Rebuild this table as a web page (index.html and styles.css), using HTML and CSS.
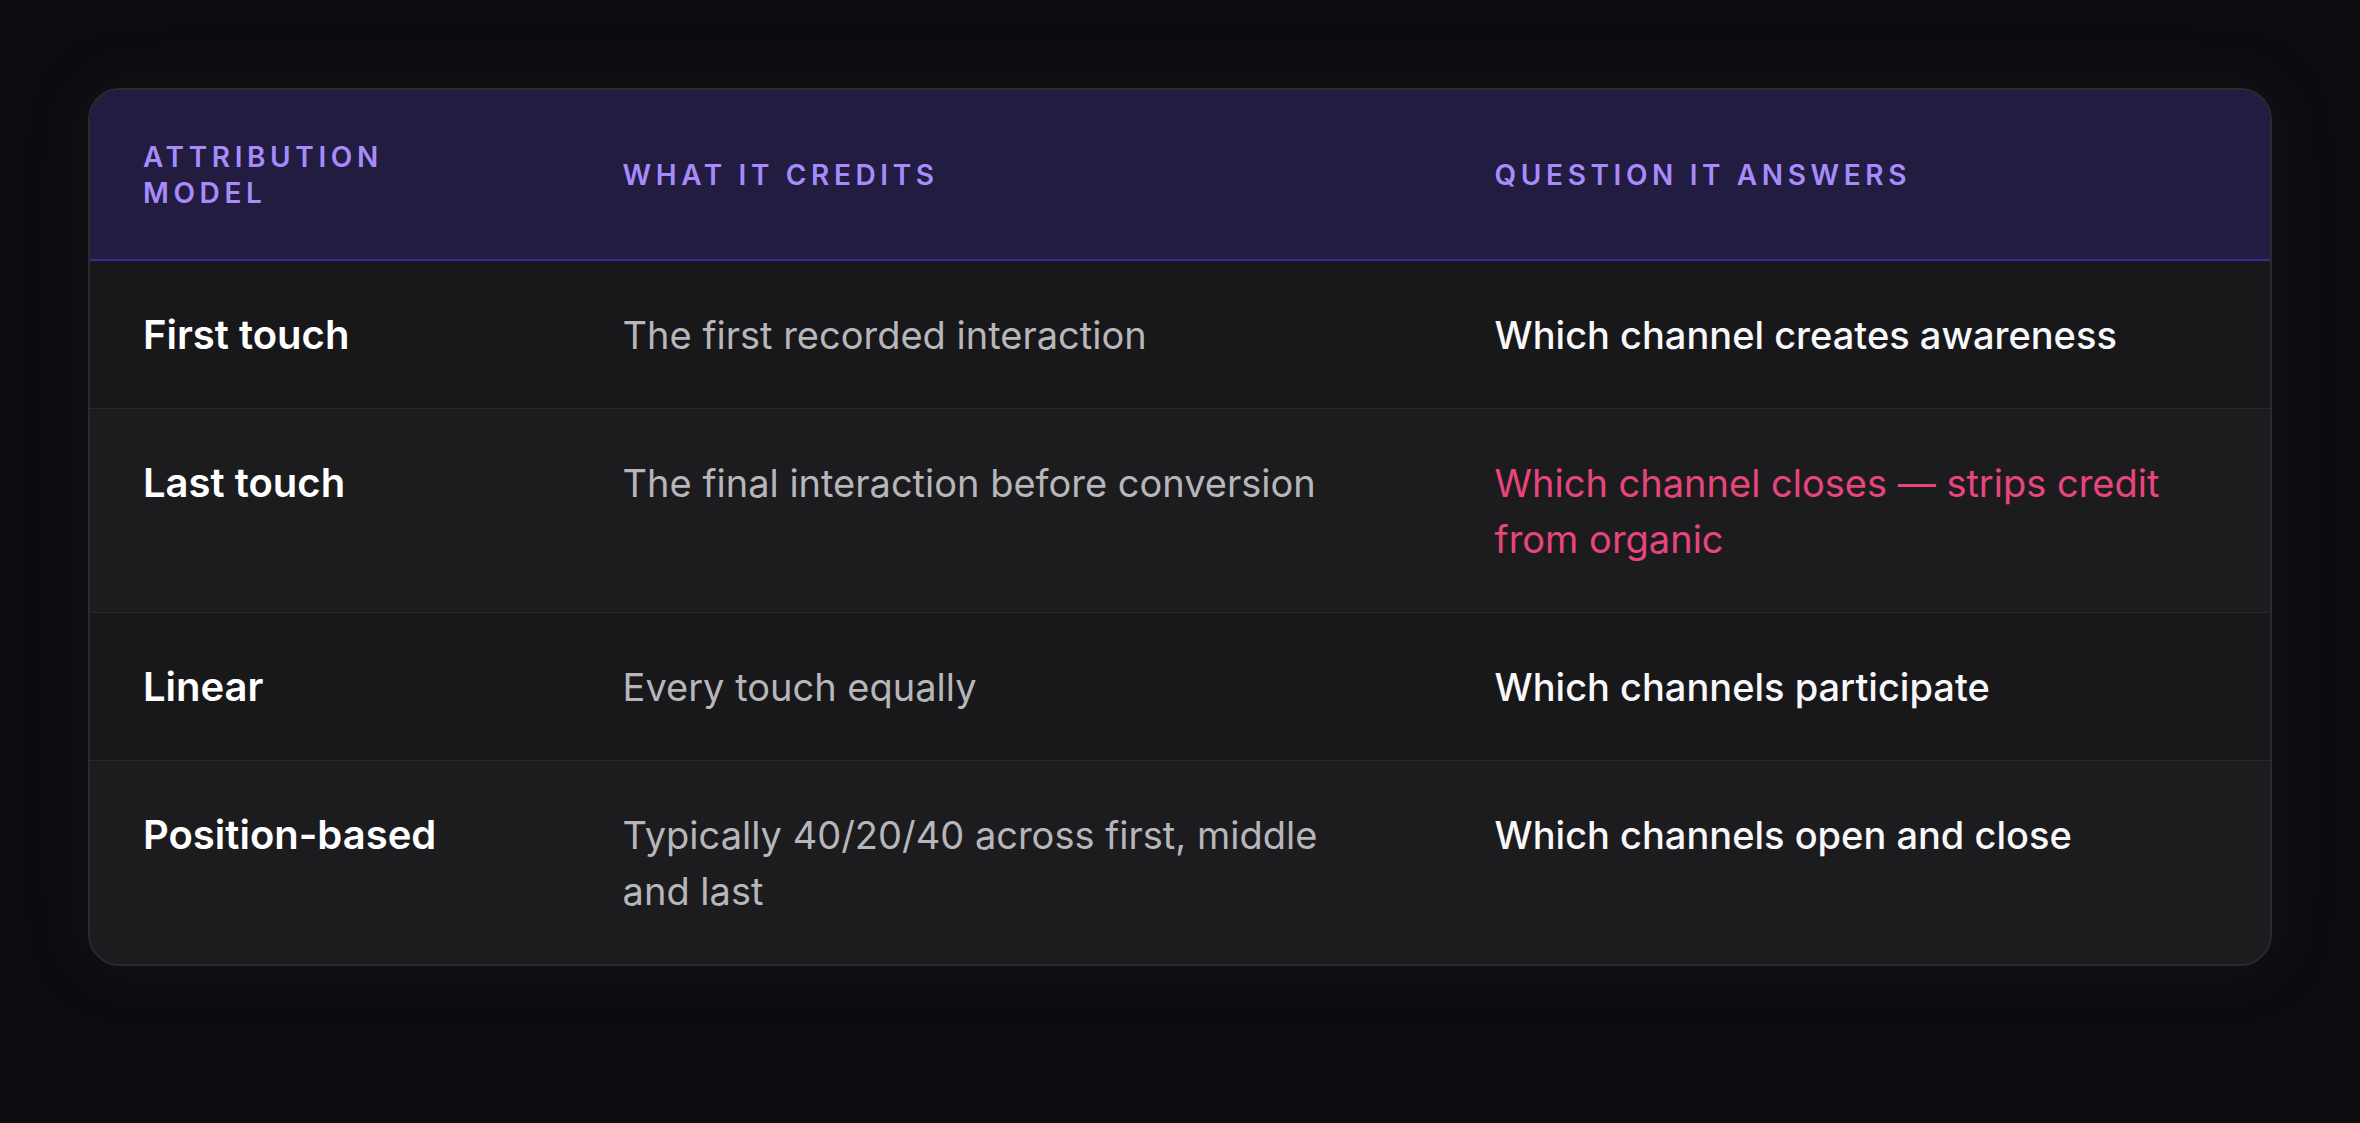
FILE: index.html
```html
<!DOCTYPE html>
<html lang="en">
<head>
<meta charset="utf-8">
<title>Attribution models</title>
<link rel="stylesheet" href="styles.css">
</head>
<body>
<div class="card">
  <table class="models">
    <colgroup>
      <col class="c1">
      <col class="c2">
      <col class="c3">
    </colgroup>
    <thead>
      <tr>
        <th class="h-model">Attribution model</th>
        <th>What it credits</th>
        <th>Question it answers</th>
      </tr>
    </thead>
    <tbody>
      <tr>
        <td class="model">First touch</td>
        <td class="credit">The first recorded interaction</td>
        <td class="answer">Which channel creates awareness</td>
      </tr>
      <tr>
        <td class="model">Last touch</td>
        <td class="credit">The final interaction before conversion</td>
        <td class="answer warn">Which channel closes — strips credit from organic</td>
      </tr>
      <tr>
        <td class="model">Linear</td>
        <td class="credit">Every touch equally</td>
        <td class="answer">Which channels participate</td>
      </tr>
      <tr>
        <td class="model">Position-based</td>
        <td class="credit">Typically 40/20/40 across first, middle and last</td>
        <td class="answer">Which channels open and close</td>
      </tr>
    </tbody>
  </table>
</div>
</body>
</html>
```

FILE: styles.css
```css
html, body {
  margin: 0;
  background: #0d0d11;
}
body {
  padding: 88px;
  font-family: Inter, "Noto Sans", sans-serif;
}
.card {
  border: 2px solid #2a2a2f;
  border-radius: 32px;
  overflow: hidden;
  background: #19191c;
  box-shadow: 0 0 60px rgba(40, 40, 50, 0.25);
}
.models {
  width: 100%;
  border-collapse: collapse;
  table-layout: fixed;
}
.c1 { width: 22%; }
.c2 { width: 40%; }
.c3 { width: 38%; }
thead tr {
  background: #221c40;
  border-bottom: 2px solid #3a2a98;
}
th {
  text-align: left;
  vertical-align: middle;
  padding: 48.5px 53px;
  font-size: 28px;
  line-height: 36px;
  font-weight: 600;
  letter-spacing: 0.165em;
  text-transform: uppercase;
  color: #a78bfa;
}
th.h-model {
  padding-right: 120px;
}
tbody tr {
  border-top: 1.5px solid #29292d;
}
tbody tr:first-child {
  border-top: none;
}
tbody tr:nth-child(odd) {
  background: #18181a;
}
tbody tr:nth-child(even) {
  background: #1c1c1f;
}
td {
  vertical-align: top;
  padding: 45.5px 53px;
  font-size: 38px;
  line-height: 56px;
}
.model {
  font-size: 40px;
  font-weight: 600;
  color: #ffffff;
}
.credit {
  font-weight: 400;
  color: #b6b6bb;
}
.answer {
  font-weight: 500;
  color: #f8f8fa;
}
.answer.warn {
  font-weight: 400;
  color: #e8457c;
}
```
